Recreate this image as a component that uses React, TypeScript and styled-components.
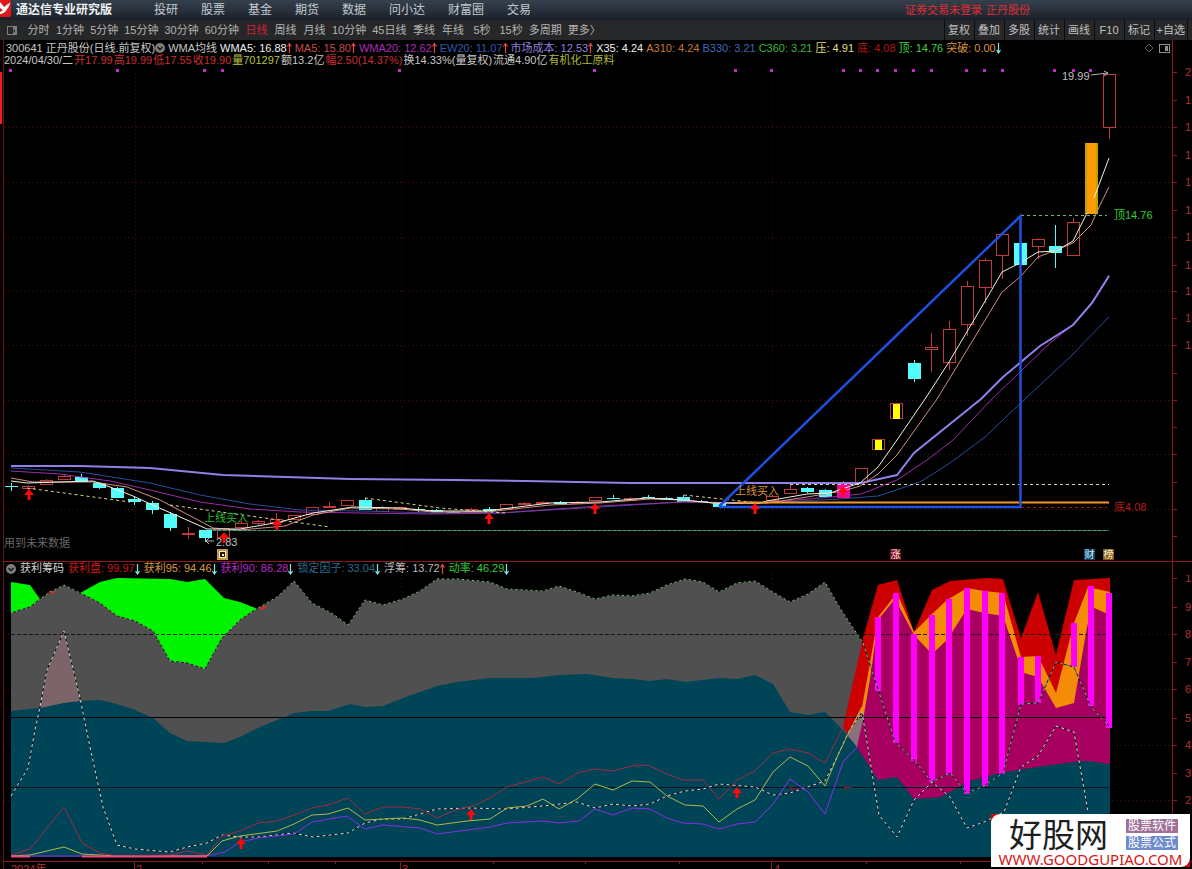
import React from "react";
import styled, { createGlobalStyle } from "styled-components";

const GlobalStyle = createGlobalStyle`
  *, *::before, *::after { box-sizing: border-box; }
  html, body { margin: 0; padding: 0; background: #000; }
  body {
    overflow: hidden;
    font-family: "Liberation Sans", "Noto Sans CJK SC", sans-serif;
    font-size: 11px;
    color: #c8c8c8;
  }
  button { font: inherit; color: inherit; background: none; border: 0; padding: 0; margin: 0; cursor: pointer; }
  a { color: inherit; text-decoration: none; }
`;

const Page = styled.div`
  position: relative;
  display: flex;
  flex-direction: column;
  background: #000;
  white-space: nowrap;
`;

const TopBar = styled.header`
  display: flex;
  align-items: center;
  height: 20px;
  overflow: hidden;
  background: linear-gradient(#35404d, #27303b 55%, #191e26);
`;

const LogoMark = styled.svg`
  flex: none;
  width: 12px;
  height: 20px;
`;

const AppTitle = styled.h1`
  flex: none;
  width: 139px;
  margin: 0;
  padding-left: 4px;
  font-size: 12px;
  line-height: 18px;
  font-weight: 700;
  color: #f0f2f4;
`;

const MainNav = styled.nav`
  display: flex;
  gap: 23px;
  padding-left: 3px;
  font-size: 12px;
  line-height: 18px;
  color: #c4cad0;
`;

const LoginStatus = styled.div`
  display: flex;
  gap: 4px;
  margin-left: auto;
  padding-right: 162px;
  line-height: 18px;
  color: #e02c30;
`;

const Toolbar = styled.div`
  display: flex;
  align-items: center;
  height: 20px;
  overflow: hidden;
  background: #262728;
`;

const ToolbarIcon = styled.svg`
  flex: none;
  width: 24px;
  height: 20px;
`;

const PeriodButton = styled.button<{ $active?: boolean }>`
  flex: none;
  min-width: 29px;
  height: 20px;
  padding: 0 3px;
  line-height: 20px;
  color: ${(p) => (p.$active ? "#d0203c" : "#b4b4b4")};
`;

const ToolGroup = styled.div`
  display: flex;
  margin-left: auto;
  padding-right: 4px;
`;

const ToolButton = styled.button`
  min-width: 30px;
  height: 20px;
  padding: 0 2px;
  line-height: 20px;
  color: #c0c0c0;
  border-left: 1px solid #0c0c0c;
  &:last-child { border-right: 1px solid #0c0c0c; }
`;

const Panel = styled.section`
  display: flex;
  flex-direction: column;
`;

const PanelHead = styled.div`
  margin: 0 19px 0 3px;
  padding-top: 2px;
  border-left: 1px solid #6e1414;
  border-right: 1px solid #8c1c1c;
  overflow: hidden;
`;

const SubPanelHead = styled(PanelHead)`
  padding-top: 0;
`;

const IndicatorRow = styled.div<{ $gap: number; $pad: number }>`
  display: flex;
  align-items: center;
  gap: ${(p) => p.$gap}px;
  height: 12px;
  padding-left: ${(p) => p.$pad}px;
  line-height: 12px;
`;

const SubIndicatorRow = styled(IndicatorRow)`
  height: 13px;
  line-height: 13px;
`;

const Reading = styled.span<{ $color: string }>`
  display: inline-flex;
  align-items: center;
  flex: none;
  color: ${(p) => p.$color};
`;

const TrendSvg = styled.svg`
  width: 5px;
  height: 12px;
  flex: none;
`;

const HeadIcons = styled.div`
  display: flex;
  align-items: center;
  gap: 5px;
  margin-left: auto;
  padding-right: 2px;
`;

const ChartSvg = styled.svg`
  display: block;
  width: 100%;
  height: auto;
  font-family: "Liberation Sans", "Noto Sans CJK SC", sans-serif;
  font-size: 11px;
`;

const SiteBadge = styled.a`
  position: absolute;
  right: 2px;
  bottom: 2px;
  display: flex;
  flex-direction: column;
  width: 199px;
  height: 53px;
  background: #fff;
  border-radius: 9px 0 9px 0;
  overflow: hidden;
`;

const BadgeCorners = styled.div`
  position: absolute;
  right: 2px;
  bottom: 2px;
  width: 199px;
  height: 53px;
  background: #d4090c;
`;

const BadgeTop = styled.div`
  display: flex;
  justify-content: space-between;
  height: 38px;
  padding: 0 12px 0 18px;
`;

const SiteName = styled.span`
  font-family: "Noto Sans CJK SC", sans-serif;
  font-size: 33px;
  line-height: 38px;
  color: #1e1e1e;
`;

const TagColumn = styled.span`
  display: flex;
  flex-direction: column;
  gap: 3px;
  padding-top: 5px;
`;

const Tag = styled.span<{ $bg: string }>`
  height: 14px;
  padding: 0 2px;
  font-size: 12px;
  line-height: 14px;
  color: #fff;
  background: ${(p) => p.$bg};
`;

const SiteUrl = styled.span`
  font-family: "Noto Sans", sans-serif;
  font-size: 15px;
  line-height: 14px;
  text-align: center;
  color: #d81414;
`;

type Trend = "up" | "down";
interface ReadingData { text: string; color: string; trend?: Trend }

const navItems = ["投研", "股票", "基金", "期货", "数据", "问小达", "财富圈", "交易"];
const periods = ["分时", "1分钟", "5分钟", "15分钟", "30分钟", "60分钟", "日线", "周线", "月线", "10分钟", "45日线", "季线", "年线", "5秒", "15秒", "多周期", "更多〉"];
const tools = ["复权", "叠加", "多股", "统计", "画线", "F10", "标记", "+自选"];

const averages: ReadingData[] = [
  { text: "WMA均线", color: "#c8c8c8" },
  { text: "WMA5: 16.88", color: "#f0f0f0", trend: "up" },
  { text: "MA5: 15.80", color: "#c84a4a", trend: "up" },
  { text: "WMA20: 12.62", color: "#b02cb8", trend: "up" },
  { text: "EW20: 11.07", color: "#3458b0", trend: "up" },
  { text: "市场成本: 12.53", color: "#8f80dc", trend: "up" },
  { text: "X35: 4.24", color: "#f0f0f0" },
  { text: "A310: 4.24", color: "#c87838" },
  { text: "B330: 3.21", color: "#3a68b8" },
  { text: "C360: 3.21", color: "#38b838" },
  { text: "压: 4.91", color: "#e0e080" },
  { text: "底: 4.08", color: "#b01818" },
  { text: "顶: 14.76", color: "#40d040" },
  { text: "突破: 0.00", color: "#d89040", trend: "down" },
];

const quote: ReadingData[] = [
  { text: "2024/04/30/二", color: "#c8c8c8" },
  { text: "开17.99", color: "#c83030" },
  { text: "高19.99", color: "#c83030" },
  { text: "低17.55", color: "#c83030" },
  { text: "收19.90", color: "#c83030" },
  { text: "量701297", color: "#b8c048" },
  { text: "额13.2亿", color: "#c8c8c8" },
  { text: "幅2.50(14.37%)", color: "#c83030" },
  { text: "换14.33%(量复权)", color: "#c8c8c8" },
  { text: "流通4.90亿", color: "#c8c8c8" },
  { text: "有机化工原料", color: "#b0b838" },
];

const chips: ReadingData[] = [
  { text: "获利筹码", color: "#d0d0d0" },
  { text: "获利盘: 99.97", color: "#cc1818", trend: "down" },
  { text: "获利95: 94.46", color: "#d89c40", trend: "down" },
  { text: "获利90: 86.28", color: "#b828c8", trend: "down" },
  { text: "锁定因子: 33.04", color: "#2c6c8c", trend: "down" },
  { text: "浮筹: 13.72", color: "#b8b8b8", trend: "up" },
  { text: "动率: 46.29", color: "#38c838", trend: "down" },
];

const TrendArrow = ({ trend }: { trend: Trend }) => (
  <TrendSvg viewBox="0 0 5 12" aria-hidden="true">
    {trend === "up" ? (
      <path d="M2.5 11V1M0.5 4.5L2.5 1.5L4.5 4.5" fill="none" stroke="#e04848" strokeWidth="1.2" />
    ) : (
      <path d="M2.5 1V11M0.5 8L2.5 11L4.5 8" fill="none" stroke="#80e8e8" strokeWidth="1.2" />
    )}
  </TrendSvg>
);

const ReadingList = ({ items }: { items: ReadingData[] }) => (
  <>
    {items.map((r) => (
      <Reading key={r.text} $color={r.color}>
        {r.text}
        {r.trend && <TrendArrow trend={r.trend} />}
      </Reading>
    ))}
  </>
);

const Collapse = () => (
  <svg width="10" height="12" viewBox="0 0 10 12" aria-hidden="true">
    <circle cx="5" cy="6" r="5" fill="#7c7c7c" />
    <path d="M2.5 5L5 7.5L7.5 5" fill="none" stroke="#111" strokeWidth="1.4" />
  </svg>
);

/* Candles: kind, top and bottom of the body, then the wick's high and low. */
type Kind = "up" | "down" | "gold" | "spark" | "pink";
type Candle = [Kind, number, number, number, number];
const candles: Candle[] = [
  ["down", 486, 487, 483, 491], ["up", 486, 488, 485, 490], ["up", 480, 484, 479, 484], ["up", 476, 479, 475, 479],
  ["down", 477, 482, 474, 482], ["down", 483, 488, 482, 489], ["down", 488, 498, 487, 498], ["down", 499, 502, 496, 505],
  ["down", 503, 510, 501, 514], ["down", 514, 528, 512, 531], ["up", 533, 534, 527, 539], ["down", 530, 538, 530, 542],
  ["up", 528, 537, 528, 537], ["up", 523, 527, 521, 527], ["up", 521, 523, 520, 525], ["up", 519, 522, 513, 522],
  ["up", 515, 519, 515, 519], ["up", 507, 514, 507, 514], ["up", 506, 507, 502, 508], ["up", 500, 505, 500, 505],
  ["down", 500, 510, 498, 510], ["up", 507, 511, 506, 511], ["up", 507, 509, 507, 509], ["down", 509, 510, 507, 512],
  ["down", 510, 512, 509, 512], ["down", 512, 513, 511, 513], ["up", 509, 511, 508, 511], ["down", 509, 511, 507, 511],
  ["up", 504, 508, 504, 508], ["up", 503, 504, 502, 505], ["up", 502, 503, 501, 503], ["down", 502, 504, 501, 504],
  ["up", 502, 503, 501, 503], ["up", 497, 500, 497, 500], ["down", 498, 499, 495, 499], ["up", 498, 500, 497, 500],
  ["down", 497, 498, 495, 499], ["down", 498, 500, 497, 500], ["down", 497, 502, 495, 502], ["down", 501, 502, 500, 502],
  ["down", 503, 507, 503, 507], ["up", 502, 503, 502, 504], ["up", 502, 503, 501, 504], ["up", 496, 500, 495, 500],
  ["up", 489, 493, 484, 494], ["down", 488, 492, 487, 493], ["down", 490, 497, 489, 497], ["pink", 484, 498, 481, 498],
  ["up", 468, 482, 468, 482], ["spark", 439, 449, 439, 449], ["spark", 403, 418, 403, 418], ["down", 363, 379, 360, 382],
  ["up", 347, 349, 333, 372], ["up", 329, 362, 321, 370], ["up", 286, 324, 281, 336], ["up", 260, 287, 258, 303],
  ["up", 234, 255, 233, 279], ["down", 243, 265, 243, 265], ["up", 239, 246, 238, 259], ["down", 246, 253, 225, 268],
  ["up", 222, 255, 218, 256], ["gold", 143, 214, 143, 214], ["up", 74, 127, 74, 139],
];
const candleX = (i: number) => Math.floor(11 + (1098 / 62) * i);

const CandleShape = ({ candle, index }: { candle: Candle; index: number }) => {
  const [kind, top, bottom, high, low] = candle;
  const x = candleX(index);
  const h = bottom - top;
  if (kind === "gold") {
    return (
      <g>
        <rect x={x - 6} y={top} width="13" height={h} fill="#c0a000" />
        <rect x={x - 4} y={top} width="9" height={h} fill="#ff9c00" />
      </g>
    );
  }
  if (kind === "down") {
    return (
      <g fill="#54fcfc">
        <rect x={x} y={high} width="1" height={low - high} />
        <rect x={x - 6} y={top} width="13" height={h} />
      </g>
    );
  }
  if (kind === "pink") {
    return (
      <g>
        <rect x={x} y={high} width="1" height={low - high} fill="#ff4040" />
        <rect x={x - 6} y={top} width="13" height={h} fill="#f800a8" />
      </g>
    );
  }
  return (
    <g>
      <path d={`M${x + 0.5} ${high}V${top}M${x + 0.5} ${bottom}V${low}`} stroke="#c03c3c" />
      <rect x={x - 5.5} y={top + 0.5} width="12" height={h} fill="#000" stroke="#c03c3c" />
      {kind === "spark" && <rect x={x - 3} y={top + 1} width="7" height={h} fill="#ffff00" />}
    </g>
  );
};

const Arrow = ({ x, y }: { x: number; y: number }) => (
  <path d={`M${x} ${y}l5 6h-3.5v5h-3v-5h-3.5z`} fill="#ff0808" />
);

const signalDots = [10, 117, 204, 222, 399, 594, 735, 771, 843, 860, 877, 895, 913, 931, 966, 984, 1002, 1054, 1073, 1090];
const priceGrid = [127, 182, 237, 291, 345, 400, 454, 509];
const priceTicks = [72, 100, 127, 155, 182, 210, 237, 265, 291, 318, 345, 373, 400, 427, 454, 482, 509, 536];
const months = [135, 401, 772];

const midAverage = "280,522 313,513 353,507 400,508 433,511 487,511 510,508 550,503 600,502 647,498 683,500 713,503 760,503 767,501 807,494 830,493";
const wma5 = `11,481 27,483 93,481 110,487 133,496 157,507 187,520 207,529 240,529 ${midAverage} 860,483 878,467 897,440 925,399 949,362 984,303 1002,272 1020,263 1038,252 1056,251 1073,241 1087,213`;
const ma5 = `11,478 33,482 93,482 127,487 160,500 200,521 213,528 240,530 285,526 313,515 350,508 400,509 433,512 487,512 550,505 600,503 650,499 683,500 713,503 767,503 807,497 843,491 860,486 878,474 897,455 937,399 967,350 1002,292 1020,277 1038,257 1056,250 1073,243 1091,225 1100,205 1109,187`;
const wma20 = "11,471 60,474 110,481 150,490 200,502 250,509 300,512 360,513 433,514 500,513 600,506 683,502 760,503 820,498 861,494 897,480 927,460 953,440 992,399 1020,372 1050,343 1073,325 1092,302 1109,275";
const ew20 = "11,468 80,472 150,483 200,495 250,504 300,510 360,511 433,513 500,513 600,507 683,502 760,503 840,499 878,496 920,482 950,463 985,437 1025,399 1070,357 1109,317";
const marketCost = "11,466 80,466 150,468 223,475 350,479 454,480 525,481 630,483 720,483 861,483 897,475 914,453 981,399 1003,377 1040,346 1073,325 1092,303 1109,276";

const EventMark = ({ x, label, bg, color }: { x: number; label: string; bg: string; color: string }) => (
  <g>
    <rect x={x - 5} y="549" width="11" height="11" fill={bg} />
    <text x={x + 0.5} y="558" fontSize="10" textAnchor="middle" fill={color}>{label}</text>
  </g>
);

const PriceChart = () => (
  <ChartSvg viewBox="0 66 1192 496" role="img" aria-label="正丹股份 日线">
    <g stroke="#481010" strokeDasharray="1 3">
      {priceGrid.map((y) => <path key={y} d={`M4 ${y + 0.5}H1172`} />)}
      {months.map((x) => <path key={x} d={`M${x + 0.5} 74V551`} />)}
    </g>
    <g stroke="#8c1c1c">
      <path d="M3.5 66V562" stroke="#6e1414" />
      <path d="M1172.5 66V562M3 561.5H1192" />
      {priceTicks.map((y) => <path key={y} d={`M1173 ${y + 0.5}h4`} />)}
    </g>
    <rect x="0" y="72" width="2" height="52" fill="#f02020" />
    <g fill="#b83030">
      {priceTicks.slice(0, 11).map((y, i) => (
        <text key={y} x="1185" y={y + 4}>{i === 0 ? "2" : "1"}</text>
      ))}
    </g>
    <g fill="#c030c0">
      {signalDots.map((x) => <rect key={x} x={x - 1} y="69" width="3" height="3" />)}
    </g>

    {candles.map((c, i) => <CandleShape key={i} candle={c} index={i} />)}

    <g fill="none">
      <path d="M213 530.5H1109" stroke="#1c5c4c" />
      <path d="M213 530.5H1109" stroke="#4ca088" strokeDasharray="3 2" />
      <polyline points={ew20} stroke="#284c9c" />
      <polyline points={wma20} stroke="#9c2ca4" />
      <polyline points={marketCost} stroke="#9080e8" strokeWidth="2" />
      <polyline points={ma5} stroke="#d09080" />
      <polyline points={wma5} stroke="#f4f0e0" />
      <path d="M1094 198L1109 158" stroke="#f4f0e0" />
      <g stroke="#d8d890" strokeDasharray="3 3">
        <path d="M27 488L130 502M170 505L330 527M365 498L440 508L505 513M684 495L760 503" />
        <path d="M790 484.5H1109" />
        <path d="M1021 215.5H1107" stroke="#70b870" />
        <path d="M1021 507.5H1107" stroke="#a01c1c" />
      </g>
      <path d="M737 502.5H1109" stroke="#f09828" strokeWidth="2" />
      <path d="M719 506.500L1020.500 216V507H719" stroke="#1c50e0" strokeWidth="2.500" />
      <path d="M1091 75L1108 73M1104 71l4 2l-4 3M206 541h8M209 538l-3 3l3 3" stroke="#b0b0b0" />
    </g>

    <Arrow x={29} y={489} />
    <Arrow x={224} y={532} />
    <Arrow x={277} y={519} />
    <Arrow x={489} y={513} />
    <Arrow x={595} y={503} />
    <Arrow x={755} y={503} />
    <Arrow x={843} y={486} />

    <text x="1062" y="80" fill="#c0c0c0">19.99</text>
    <text x="216" y="546" fill="#c0c0c0">2.83</text>
    <text x="1114" y="219" fill="#30d030">顶14.76</text>
    <text x="1114" y="511" fill="#b81c1c">底4.08</text>
    <text x="204" y="522" fill="#30b830">上线买入</text>
    <text x="735" y="495" fill="#d89038">上线买入</text>
    <text x="4" y="547" fill="#686868">用到未来数据</text>

    <g fill="none">
      <rect x="217" y="549" width="11" height="11" fill="#c09848" />
      <rect x="219.500" y="551.500" width="6" height="6" fill="#20180c" stroke="#fff0c0" />
      <rect x="222" y="554" width="2" height="2" fill="#fff0c0" />
    </g>
    <EventMark x={895} label="涨" bg="#700818" color="#ffe8e8" />
    <EventMark x={1089} label="财" bg="#104468" color="#d8f0ff" />
    <EventMark x={1108} label="榜" bg="#7c5818" color="#fff0d0" />
  </ChartSvg>
);

const greyTop = "11,613 30,607 40,599 50,592 64,585 80,593 100,603 117,616 135,621 153,631 170,661 187,663 205,669 222,638 240,620 258,608 277,597 294,581 312,603 333,614 348,625 365,600 383,605 403,599 420,591 437,579 457,579 490,582 507,589 543,591 559,586 577,592 595,599 613,595 632,596 650,593 667,585 685,579 703,582 719,592 737,583 755,581 773,592 790,602 808,594 825,582 840,608 863,643";
const momentumTail = "863,643 879,692 895,742 914,760 932,782 950,773 967,793 984,786 1003,773 1021,704 1038,703 1056,662 1074,667 1091,707 1110,727";
const lockTop = "11,711 40,708 63,703 80,701 100,700 117,704 135,710 153,718 170,733 187,741 224,743 240,737 260,727 294,713 312,711 328,711 350,704 365,707 383,706 403,698 420,692 437,686 457,682 490,678 533,678 560,675 587,674 612,678 632,679 650,681 667,679 685,682 719,678 737,679 755,675 773,684 790,712 808,715 825,712 843,730 857,747 878,780 897,777 914,799 940,797 970,781 1000,773 1030,768 1073,762 1087,761 1110,764";
const redArea = "843,727 863,638 878,585 897,580 914,632 932,590 950,581 987,578 1003,579 1021,638 1038,592 1056,655 1074,580 1110,578 1110,857 857,857 857,747";
const orangeArea = "848,734 862,707 870,663 878,617 897,593 914,632 932,614 947,600 967,588 984,591 1003,593 1021,657 1038,656 1056,693 1074,623 1088,587 1110,592 1110,857 857,857 857,747";
const plumArea = "857,747 863,720 871,673 878,620 895,599 914,635 932,654 947,640 967,609 984,613 1003,616 1017,657 1024,673 1038,677 1056,708 1074,703 1087,627 1092,607 1110,615 1110,857 857,857";
const floatLine = "11,796 28,768 35,730 40,707 47,670 64,631 80,698 90,747 103,807 117,845 135,849 170,852 187,847 207,843 222,835 240,837 260,837 293,833 313,837 348,833 365,823 383,819 403,819 420,814 437,809 470,808 507,809 543,806 577,802 595,808 613,804 632,806 650,804 667,796 685,791 703,789 719,784 755,787 773,795 790,793 825,781 838,755 848,733 862,712 879,815 897,837 914,800 932,782 950,797 967,828 984,822 1004,812 1021,767 1038,756 1056,726 1074,732 1088,812";
const profitLine = "11,855 30,849 64,807 82,843 100,853 117,856 170,855 187,851 207,855 222,836 240,831 258,823 277,821 294,815 312,808 328,805 348,798 365,814 383,807 403,807 420,809 437,818 455,810 473,806 490,798 507,787 543,777 559,784 577,773 595,769 613,771 632,766 648,765 667,774 683,780 703,780 719,799 737,780 755,771 773,753 790,749 808,753 825,763 843,727";
const profit95 = "11,856 30,855 64,847 82,854 117,856 207,856 222,841 240,836 277,831 294,824 312,815 328,814 348,808 365,820 403,818 420,820 437,825 467,821 490,819 507,808 527,806 543,799 559,809 577,799 595,784 613,790 632,781 650,782 667,796 685,805 703,806 719,822 737,809 755,800 773,772 790,757 808,766 825,786 838,755 848,734 862,707";
const profit90 = "11,856 207,856 225,852 240,842 258,838 294,834 312,822 347,816 365,829 383,825 420,828 437,834 490,827 507,823 543,821 559,823 579,821 595,809 613,815 632,808 650,809 667,818 683,823 703,824 719,829 737,824 755,822 773,804 790,779 808,792 825,814 843,762 857,747";

const chipBars: [number, number, number][] = [
  [878, 617, 691], [896, 593, 743], [914, 634, 761], [932, 615, 782], [949, 599, 774], [967, 588, 794], [985, 591, 786],
  [1002, 593, 774], [1021, 657, 705], [1038, 656, 703], [1074, 623, 667], [1091, 586, 706], [1109, 593, 728],
];
const chipScale: [string, number][] = [
  ["1", 578], ["9", 607], ["8", 634], ["7", 662], ["6", 689], ["5", 718], ["4", 745], ["3", 773], ["2", 800],
];
const minorTicks = [202, 268, 335, 493, 585, 679, 866, 960];

const ChipChart = () => (
  <ChartSvg viewBox="0 575 1192 294" role="img" aria-label="获利筹码">
    <g stroke="#481010" strokeDasharray="1 3">
      {[634, 689, 745, 800].map((y) => <path key={y} d={`M4 ${y + 0.5}H1172`} />)}
      {months.map((x) => <path key={x} d={`M${x + 0.5} 575V861`} />)}
    </g>
    <g stroke="#8c1c1c">
      <path d="M3.5 575V869" stroke="#6e1414" />
      <path d="M1172.5 575V861M3 861.5H1192" />
      {chipScale.map(([, y]) => <path key={y} d={`M1173 ${y + 0.5}h4`} />)}
      {months.map((x) => <path key={x} d={`M${x - 0.5} 861V869`} />)}
      {minorTicks.map((x) => <path key={x} d={`M${x + 0.5} 861v3`} />)}
    </g>
    <g fill="#b83030">
      {chipScale.map(([label, y]) => <text key={y} x="1185" y={y + 4}>{label}</text>)}
      <text x="11" y="873">2024年</text>
      <text x="136" y="873">2</text>
      <text x="402" y="873">3</text>
      <text x="774" y="873">4</text>
    </g>

    <polygon points="11,582 30,585 40,599 40,640 11,640" fill="#00f400" />
    <polygon points="80,593 100,582 117,578 170,579 187,582 205,579 224,598 240,602 258,609 240,680 135,680" fill="#00f400" />
    <polygon points={`${greyTop} 863,857 11,857`} fill="#505050" />
    <polygon points={redArea} fill="#cc0000" />
    <polygon points={orangeArea} fill="#f48c08" />
    <polygon points="845,733 848,734 862,712 864,718 860,748 857,749" fill="#88707c" />
    <polygon points={plumArea} fill="#a80060" />
    <polygon points={`${lockTop} 1110,857 11,857`} fill="#004458" />
    <polygon points="40,708 47,670 64,631 80,701 63,703" fill="#7c6468" />
    <path d="M47 593l3-2h6l-3 3zM259 609l3-3h5l-3 4z" fill="#c83030" />

    <path d="M11 634.500H1109" stroke="#181418" strokeDasharray="4 2" />
    <path d="M11 717.500H1109" stroke="#000008" />
    <path d="M11 787.500H1109" stroke="#041420" />

    <g fill="#ff00ff">
      {chipBars.map(([x, top, bottom]) => (
        <rect key={x} x={x - 3} y={top} width="6" height={bottom - top} />
      ))}
    </g>

    <g fill="none">
      <polyline points={greyTop} stroke="#102010" />
      <polyline points={greyTop} stroke="#90b890" strokeDasharray="2 3" />
      <polyline points={momentumTail} stroke="#101810" />
      <polyline points={momentumTail} stroke="#80a898" strokeDasharray="3 3" />
      <polyline points={floatLine} stroke="#081018" />
      <polyline points={floatLine} stroke="#d8d8d8" strokeDasharray="3 3" />
      <polyline points={profit90} stroke="#8c2ce8" />
      <polyline points={profit95} stroke="#b0b848" />
      <polyline points={profitLine} stroke="#a02c40" />
      <path d="M11 856.500H30M82 856.500H207" stroke="#f04880" strokeWidth="2" />
      <path d="M790 788.500h9M793 786l-3 2l3 3M844 787.500h8M847 785l-3 3l3 3" stroke="#901820" />
    </g>
    <Arrow x={241} y={838} />
    <Arrow x={471} y={809} />
    <Arrow x={737} y={787} />
  </ChartSvg>
);

export default function App() {
  return (
    <>
      <GlobalStyle />
      <Page>
        <TopBar>
          <LogoMark viewBox="0 0 12 20" aria-hidden="true">
            <rect x="-6" y="0" width="17" height="17" rx="2" fill="#e01818" />
            <path d="M0 2L3 5.500L4 7L10 2.500C10 6 7 9 5 12C3 13.500 1 14 0 14L0 12L3 10L0 8Z" fill="#fff" />
          </LogoMark>
          <AppTitle>通达信专业研究版</AppTitle>
          <MainNav>
            {navItems.map((n) => <a key={n} href="#">{n}</a>)}
          </MainNav>
          <LoginStatus>
            <span>证券交易未登录</span>
            <span>正丹股份</span>
          </LoginStatus>
        </TopBar>

        <Toolbar>
          <ToolbarIcon viewBox="0 0 24 20" aria-hidden="true">
            <rect x="7.500" y="6.500" width="9" height="8" fill="none" stroke="#808080" />
            <path d="M13 7h3v7h-3z" fill="#808080" />
            <path d="M15 9l-2 2l2 2z" fill="#262728" />
          </ToolbarIcon>
          {periods.map((p) => (
            <PeriodButton key={p} type="button" $active={p === "日线"}>{p}</PeriodButton>
          ))}
          <ToolGroup>
            {tools.map((t) => <ToolButton key={t} type="button">{t}</ToolButton>)}
          </ToolGroup>
        </Toolbar>

        <Panel>
          <PanelHead>
            <IndicatorRow $gap={3} $pad={2}>
              <Reading $color="#c8c8c8">
                300641 正丹股份(日线.前复权)
                <Collapse />
              </Reading>
              <ReadingList items={averages} />
              <HeadIcons>
                <svg width="10" height="12" viewBox="0 0 10 12" aria-hidden="true">
                  <path d="M5 2L9 6L5 10L1 6Z" fill="none" stroke="#606060" />
                </svg>
                <svg width="11" height="12" viewBox="0 0 11 12" aria-hidden="true">
                  <rect x="0.500" y="2.500" width="10" height="8" fill="none" stroke="#909090" />
                  <rect x="6" y="4" width="3" height="5" fill="#909090" />
                </svg>
              </HeadIcons>
            </IndicatorRow>
            <IndicatorRow $gap={1} $pad={0}>
              <ReadingList items={quote} />
            </IndicatorRow>
          </PanelHead>
          <PriceChart />
        </Panel>

        <Panel>
          <SubPanelHead>
            <SubIndicatorRow $gap={4} $pad={2}>
              <Reading $color="#c8c8c8"><Collapse /></Reading>
              <ReadingList items={chips} />
            </SubIndicatorRow>
          </SubPanelHead>
          <ChipChart />
        </Panel>

        <BadgeCorners />
        <SiteBadge href="#">
          <BadgeTop>
            <SiteName>好股网</SiteName>
            <TagColumn>
              <Tag $bg="#a07098">股票软件</Tag>
              <Tag $bg="#6c8ccc">股票公式</Tag>
            </TagColumn>
          </BadgeTop>
          <SiteUrl>WWW.GOODGUPIAO.COM</SiteUrl>
        </SiteBadge>
      </Page>
    </>
  );
}
